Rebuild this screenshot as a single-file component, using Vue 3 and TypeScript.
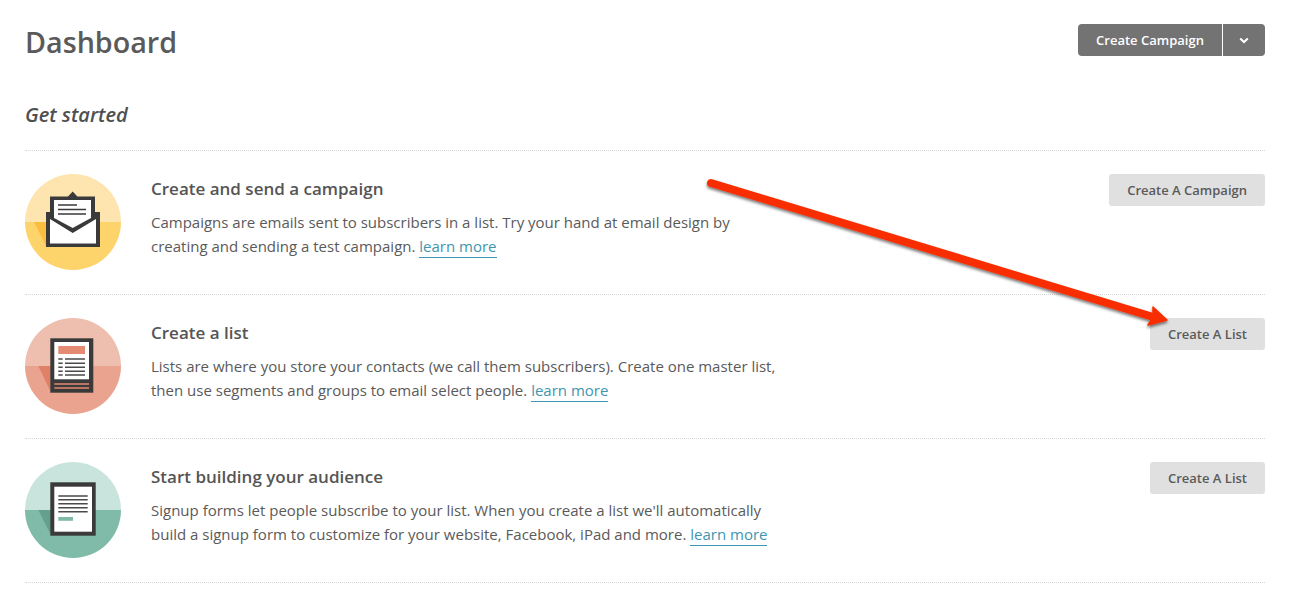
<script setup lang="ts">
interface Step {
  title: string;
  text: string;
  action: string;
  icon: "mail" | "list" | "form";
}

const steps: Step[] = [
  {
    title: "Create and send a campaign",
    text: "Campaigns are emails sent to subscribers in a list. Try your hand at email design by creating and sending a test campaign.",
    action: "Create A Campaign",
    icon: "mail",
  },
  {
    title: "Create a list",
    text: "Lists are where you store your contacts (we call them subscribers). Create one master list, then use segments and groups to email select people.",
    action: "Create A List",
    icon: "list",
  },
  {
    title: "Start building your audience",
    text: "Signup forms let people subscribe to your list. When you create a list we'll automatically build a signup form to customize for your website, Facebook, iPad and more.",
    action: "Create A List",
    icon: "form",
  },
];

const clipId = (icon: string) => `clip-${icon}`;
</script>

<template>
  <main class="page">
    <header class="top">
      <h1>Dashboard</h1>
      <div class="split">
        <button class="split-main">Create Campaign</button>
        <button class="split-caret" aria-label="More">
          <svg width="10" height="7" viewBox="0 0 10 7">
            <path d="M1.2 1.4 5 5l3.8-3.6" fill="none" stroke="#fff" stroke-width="2" />
          </svg>
        </button>
      </div>
    </header>

    <h2>Get started</h2>

    <ul class="steps">
      <li v-for="step in steps" :key="step.icon" class="step">
        <svg class="badge" width="96" height="96" viewBox="0 0 96 96">
          <defs>
            <clipPath :id="clipId(step.icon)">
              <circle cx="48" cy="48" r="48" />
            </clipPath>
          </defs>

          <g v-if="step.icon === 'mail'" :clip-path="`url(#${clipId(step.icon)})`">
            <rect width="96" height="48" fill="#fee5b0" />
            <rect y="48" width="96" height="48" fill="#fdd36b" />
            <path d="M9 48h12v24z" fill="#fbbd3f" />
            <path d="M21 38h4V22.500h18l4.700-5 4.700 5H70V38h5v35H21z" fill="#3a3a3a" />
            <path d="M29 26h37v18L47.700 54 29 44z" fill="#fff" />
            <path d="M25 45 47.700 59 71 45v24.500H25z" fill="#fff" />
            <path d="M33 31h19M33 35.500h28M33 40h28" stroke="#3a3a3a" stroke-width="1.400" />
          </g>

          <g v-else-if="step.icon === 'list'" :clip-path="`url(#${clipId(step.icon)})`">
            <rect width="96" height="48" fill="#eebeaf" />
            <rect y="48" width="96" height="48" fill="#e9a38f" />
            <path d="M13.300 48h12v25z" fill="#df8068" />
            <rect x="25.300" y="20.300" width="43" height="54.400" fill="#3a3a3a" />
            <rect x="29.300" y="24" width="34.700" height="37.300" fill="#fff" />
            <rect x="33.300" y="28" width="26.700" height="8" fill="#e58a73" />
            <path
              d="M33.300 41h4.400M40 41h20M33.300 45.200h4.400M40 45.200h20M33.300 49.300h4.400M40 49.300h20M33.300 53.300h4.400M40 53.300h20M33.300 57h4.400M40 57h20"
              stroke="#4a4a4a"
              stroke-width="1.600"
            />
            <path d="M29.300 66H64M29.300 70H64" stroke="#e58a73" stroke-width="1.400" />
          </g>

          <g v-else :clip-path="`url(#${clipId(step.icon)})`">
            <rect width="96" height="48" fill="#c9e4dc" />
            <rect y="48" width="96" height="48" fill="#80bba9" />
            <path d="M13.300 48h12v24z" fill="#65a08e" />
            <rect x="25.300" y="20.300" width="45.400" height="53.400" fill="#3a3a3a" />
            <rect x="29.300" y="24.700" width="37.700" height="45" fill="#fff" />
            <path
              d="M33.300 34h29.400M33.300 37.800h29.400M33.300 41.800h29.400M33.300 45.800h29.400M33.300 49.800h29.400"
              stroke="#4a4a4a"
              stroke-width="1.500"
            />
            <rect x="33.300" y="55" width="14.700" height="3.800" fill="#80bba9" />
          </g>
        </svg>

        <div class="copy">
          <h3>{{ step.title }}</h3>
          <p>{{ step.text }} <a href="#">learn more</a></p>
        </div>

        <button class="action">{{ step.action }}</button>
      </li>
    </ul>

    <svg class="arrow" width="1308" height="595" viewBox="0 0 1308 595">
      <defs>
        <filter id="arrow-shadow" x="-5%" y="-10%" width="110%" height="130%">
          <feDropShadow dx="0" dy="2" stdDeviation="1.500" flood-color="#000" flood-opacity="0.55" />
        </filter>
      </defs>
      <g filter="url(#arrow-shadow)">
        <path d="M711 183 1150 316" stroke="#f92f06" stroke-width="8" stroke-linecap="round" fill="none" />
        <path d="M1153 307 1167 320 1148 325 1153 317z" fill="#f92f06" stroke="#f92f06" stroke-width="1.500" stroke-linejoin="round" />
      </g>
    </svg>
  </main>
</template>

<style scoped>
.page {
  position: relative;
  width: 1308px;
  height: 595px;
  padding: 24px 43px 0 25px;
  box-sizing: border-box;
  overflow: hidden;
  background: #fff;
  color: #4a4a4a;
  font-family: "Open Sans", "Liberation Sans", sans-serif;
}

.top {
  display: flex;
  justify-content: space-between;
  align-items: center;
  height: 32px;
}

h1 {
  margin: 4px 0 0;
  font-size: 28.7px;
  font-weight: 600;
  line-height: 36px;
  color: #5a5a5a;
}

.split {
  display: flex;
  gap: 1px;
}

button {
  border: 0;
  height: 32px;
  font-family: inherit;
  font-size: 13px;
  font-weight: 600;
  cursor: pointer;
}

.split-main,
.split-caret {
  background: #737373;
  color: #fff;
}

.split-main {
  width: 144px;
  padding: 0;
  border-radius: 4px 0 0 4px;
}

.split-caret {
  display: flex;
  align-items: center;
  justify-content: center;
  width: 42px;
  padding: 0;
  border-radius: 0 4px 4px 0;
}

h2 {
  margin: 45px 0 21px;
  font-size: 20px;
  font-style: italic;
  font-weight: 600;
  line-height: 28px;
  color: #4f4f4f;
}

.steps {
  margin: 0;
  padding: 0;
  list-style: none;
  border-top: 1px dotted #d8d8d8;
}

.step {
  display: flex;
  align-items: flex-start;
  gap: 30px;
  padding: 23px 0 24px;
  border-bottom: 1px dotted #d8d8d8;
}

.badge {
  flex: none;
}

.copy {
  flex: 1;
  min-width: 0;
}

h3 {
  margin: 3px 0 9px;
  font-size: 17px;
  font-weight: 600;
  line-height: 24px;
  color: #555;
}

p {
  max-width: 630px;
  margin: 0;
  font-size: 15px;
  line-height: 24px;
  color: #5a5a5a;
}

a {
  color: #3e96b0;
  text-decoration: none;
  border-bottom: 1px solid #3e96b0;
  padding-bottom: 1px;
}

.action {
  flex: none;
  padding: 0 18px;
  border-radius: 3px;
  background: #e0e0e0;
  color: #5a5a5a;
}

.arrow {
  position: absolute;
  left: 0;
  top: 0;
  pointer-events: none;
}
</style>
